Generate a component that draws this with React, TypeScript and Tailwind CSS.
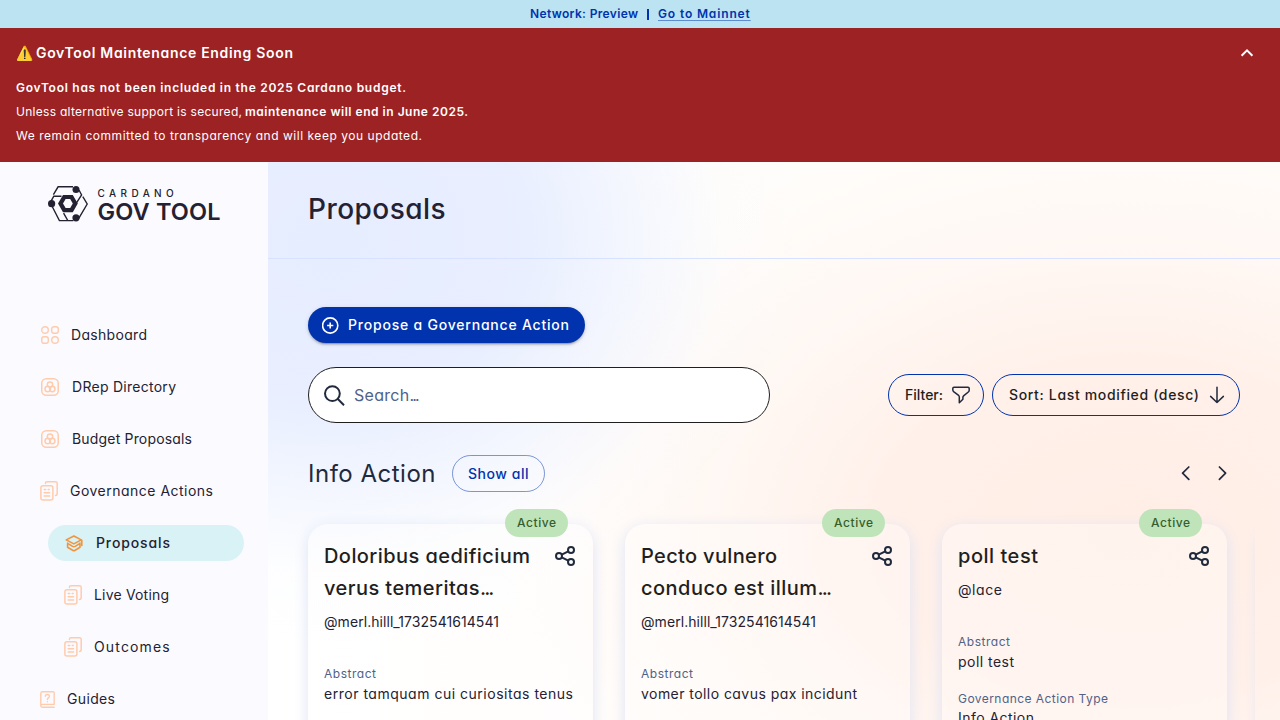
import type { ReactNode } from "react";

const peach = "#FFCBAD";

function Logo() {
  return (
    <svg width="40" height="36" viewBox="0 0 40 36" fill="none" stroke="#242232" strokeWidth="1.4">
      <path d="M5.4 8.6 10.1.8H25" />
      <path d="M2.5 16.2 5.8 10.2H13.5" />
      <path d="M31 4 33.6 9 28.3 17.2" />
      <path d="M34.8 10.6 39.2 18 30.6 32.6" />
      <path d="M4.2 20.5 11.4 34.6H19.4" />
      <path d="M15.6 27.2 19.8 34.6H25.4" />
      <circle cx="28" cy="3.5" r="3.5" fill="#242232" stroke="none" />
      <circle cx="3.6" cy="17.7" r="3.6" fill="#242232" stroke="none" />
      <circle cx="28" cy="31.8" r="3.6" fill="#242232" stroke="none" />
      <path fillRule="evenodd" d="M15 9H24.8L29.8 17.6 24.8 26.2H15L10 17.6ZM17.6 13.1 15 17.6 17.6 22.1H22.2L24.8 17.6 22.2 13.1Z" fill="#242232" stroke="none" />
    </svg>
  );
}

function GridIcon() {
  return (
    <svg width="18" height="18" viewBox="0 0 18 18" fill="none" stroke={peach} strokeWidth="1.4">
      <circle cx="4" cy="4" r="3.3" />
      <rect x="10.7" y="0.7" width="6.6" height="6.6" rx="2.2" />
      <rect x="0.7" y="10.7" width="6.6" height="6.6" rx="2.2" />
      <circle cx="14" cy="14" r="3.3" />
    </svg>
  );
}

function RingsIcon() {
  return (
    <svg width="18" height="18" viewBox="0 0 18 18" fill="none" stroke={peach} strokeWidth="1.5">
      <rect x="0.75" y="0.75" width="16.5" height="16.5" rx="4.5" />
      <circle cx="9" cy="6.6" r="2.7" />
      <circle cx="6.7" cy="11" r="2.7" />
      <circle cx="11.3" cy="11" r="2.7" />
    </svg>
  );
}

function DocsIcon() {
  return (
    <svg width="18" height="20" viewBox="0 0 18 20" fill="none" stroke={peach} strokeWidth="1.5" strokeLinecap="round">
      <rect x="0.9" y="4.8" width="12" height="14.3" rx="2" />
      <path d="M5.4 2.4C5.4 1.3 6.1.8 7 .8H15.4C16.5.8 17.2 1.3 17.2 2.4V12.6C17.2 13.7 16.6 14.4 15.5 14.4M4.2 8.6H5.8M8.2 8.6H9.2M4.2 11.7H9.6M4.2 14.9H9.6" />
    </svg>
  );
}

function HatIcon() {
  return (
    <svg width="18" height="17" viewBox="0 0 18 17" fill="none" stroke="#F0953F" strokeWidth="1.6" strokeLinejoin="round" strokeLinecap="round">
      <path d="M8.9 1 16.2 4.9 8.9 8.9 1.2 4.9ZM16.8 5.4V10.6M2.6 8V12.2L7.6 15.2Q8.9 16 10.2 15.2L15 12.2V8M2.6 8.4 7.6 11.4Q8.9 12.1 10.2 11.4L15 8.4" />
    </svg>
  );
}

function GuideIcon() {
  return (
    <svg width="15" height="17" viewBox="0 0 15 17" fill="none" stroke={peach} strokeWidth="1.4" strokeLinecap="round">
      <path d="M14.2 13.4V2.2C14.2 1.2 13.8.7 12.8.7H2.4C1.3.7.8 1.3.8 2.4V14.6M14.2 13.4H2.2C.3 13.4.3 16.3 2.2 16.3H14.2" />
      <path d="M5.4 5.2C5.4 2.9 9.4 3 9.4 5.3C9.4 6.9 7.4 6.9 7.4 8.5M7.4 10.6V10.7" />
    </svg>
  );
}

function NavItem({ icon, className, children }: { icon: ReactNode; className: string; children: ReactNode }) {
  return (
    <div className={`flex h-9 items-center whitespace-nowrap text-sm ${className}`}>
      {icon}
      {children}
    </div>
  );
}

function ShareIcon() {
  return (
    <svg className="mt-1 shrink-0" width="24" height="24" viewBox="0 0 24 24" fill="none" stroke="#212A3D" strokeWidth="2">
      <circle cx="6" cy="12" r="3" />
      <circle cx="18" cy="6" r="3" />
      <circle cx="18" cy="18" r="3" />
      <path d="M8.7 10.7 15.3 7.3M8.7 13.3 15.3 16.7" />
    </svg>
  );
}

function Card({ title, author, authorClass, children }: { title: ReactNode; author: string; authorClass: string; children: ReactNode }) {
  return (
    <article className="relative h-[420px] w-[285px] shrink-0 rounded-[20px] bg-white/30 p-4 shadow-[0_4px_15px_0_#DDE3F5]">
      <span className="absolute -top-[15px] right-[25px] flex h-7 w-[63px] items-center rounded-full bg-[#C0E4BA] pl-3 text-xs font-medium tracking-[0.57px] text-[#365E2C]">
        Active
      </span>
      <div className="flex justify-between">
        <h3 className="whitespace-nowrap text-[20px] font-medium leading-8 text-[#1F1F1F]">{title}</h3>
        <ShareIcon />
      </div>
      <p className={`mt-2 whitespace-nowrap text-sm leading-5 ${authorClass}`}>{author}</p>
      {children}
    </article>
  );
}

function Label({ className, children }: { className: string; children: ReactNode }) {
  return <p className={`text-xs leading-4 text-[#506288] ${className}`}>{children}</p>;
}

function Dots() {
  return <span className="tracking-[-1.9px]">...</span>;
}

export default function App() {
  return (
    <div className="flex h-[720px] w-[1280px] flex-col overflow-hidden bg-white text-[#242232] [font-family:Inter,sans-serif] [font-feature-settings:'cv11']">
      <div className="flex h-7 shrink-0 items-center whitespace-nowrap bg-[#BBE3F1] pl-[530px] text-xs font-semibold text-[#0033AD]">
        <span className="w-[116px] tracking-[0.35px]">Network: Preview</span>
        <span className="ml-[1px] h-[11px] w-[1.5px] bg-[#0033AD]" />
        <a className="ml-[9.5px] tracking-[0.86px] underline decoration-[#0033AD]/50 underline-offset-2">Go to Mainnet</a>
      </div>

      <section className="h-[134px] shrink-0 whitespace-nowrap bg-[#9C2224] pl-4 pr-6 pt-[13px] text-white">
        <div className="flex h-6 items-center justify-between">
          <h2 className="flex items-center text-sm font-semibold">
            <span className="w-5 text-[14px]">⚠️</span>
            <span className="tracking-[0.677px]">GovTool Maintenance Ending Soon</span>
          </h2>
          <svg width="18" height="18" viewBox="0 0 18 18" fill="none" stroke="white" strokeWidth="2">
            <path d="M3.6 11.8 9 6.4 14.4 11.8" />
          </svg>
        </div>
        <div className="mt-[11px] text-xs leading-6">
          <p className="font-semibold tracking-[0.731px]">GovTool has not been included in the 2025 Cardano budget.</p>
          <p className="flex">
            <span className="w-[229px] tracking-[0.286px]">Unless alternative support is secured,</span>
            <b className="font-semibold tracking-[0.516px]">maintenance will end in June 2025.</b>
          </p>
          <p className="tracking-[0.532px]">We remain committed to transparency and will keep you updated.</p>
        </div>
      </section>

      <div className="flex min-h-0 flex-1">
        <aside className="w-[268px] shrink-0 bg-[#FBFBFF]">
          <div className="flex pl-12 pt-6">
            <Logo />
            <div className="ml-[9.5px] whitespace-nowrap">
              <div className="mt-[1px] text-[10px] font-medium leading-3 tracking-[4.4px]">CARDANO</div>
              <div className="mt-[1px] text-[23.5px] font-semibold leading-6 tracking-[0.15px]">GOV TOOL</div>
            </div>
          </div>
          <nav className="mt-[93px] flex flex-col gap-4">
            <NavItem className="gap-3 pl-[41px] tracking-[0.313px]" icon={<GridIcon />}>Dashboard</NavItem>
            <NavItem className="gap-[13px] pl-[41px] tracking-[0.272px]" icon={<RingsIcon />}>DRep Directory</NavItem>
            <NavItem className="gap-[13px] pl-[41px] tracking-[0.176px]" icon={<RingsIcon />}>Budget Proposals</NavItem>
            <NavItem className="gap-3 pl-10 tracking-[0.487px]" icon={<DocsIcon />}>Governance Actions</NavItem>
            <NavItem className="ml-12 w-[196px] gap-[13px] rounded-full bg-[#D8F2F6] pl-[17px] font-medium tracking-[0.879px]" icon={<HatIcon />}>
              Proposals
            </NavItem>
            <NavItem className="gap-3 pl-16 tracking-[0.183px]" icon={<DocsIcon />}>Live Voting</NavItem>
            <NavItem className="gap-3 pl-16 tracking-[1.15px]" icon={<DocsIcon />}>Outcomes</NavItem>
            <NavItem className="gap-3 pl-10 tracking-[0.35px]" icon={<GuideIcon />}>Guides</NavItem>
          </nav>
        </aside>

        <main className="min-w-0 flex-1 overflow-hidden bg-[radial-gradient(ellipse_480px_400px_at_60px_80px,#E6EDFF_0%,#E9EFFF_42%,rgba(238,243,255,0.7)_62%,rgba(248,250,255,0.3)_82%,rgba(255,255,255,0)_100%),radial-gradient(ellipse_620px_420px_at_860px_370px,#FFEEE6_0%,#FFF0E9_38%,rgba(255,245,240,0.7)_66%,rgba(255,253,250,0)_100%),linear-gradient(90deg,#ffffff_0%,#FFFDFA_50%)]">
          <header className="flex h-[97px] items-center border-b border-[#D6E2FF] pb-[2px] pl-10">
            <h1 className="text-[28px] font-medium tracking-[0.45px]">Proposals</h1>
          </header>

          <div className="pl-10 pr-10 pt-12">
            <button className="flex h-9 w-[277px] items-center whitespace-nowrap rounded-full bg-[#0033AD] pl-[14px] text-sm font-medium tracking-[0.79px] text-white shadow-[0_3px_1px_-2px_rgba(0,0,0,0.2),0_2px_2px_0_rgba(0,0,0,0.14),0_1px_5px_0_rgba(0,0,0,0.12)]">
              <svg className="mr-2 shrink-0" width="17" height="17" viewBox="0 0 17 17" fill="none" stroke="white" strokeWidth="1.6">
                <circle cx="8.2" cy="8.5" r="7.6" />
                <path d="M8.2 5.4V11.6M5.1 8.5H11.3" />
              </svg>
              <span className="pl-[1px]">Propose a Governance Action</span>
            </button>

            <div className="mt-6 flex items-center justify-between">
              <div className="flex h-14 w-[462px] items-center rounded-full border border-[#1F1F1F] bg-white pl-[15px] text-base tracking-[0.3px] text-[#506288]">
                <svg className="mr-[9px]" width="21" height="21" viewBox="0 0 21 21" fill="none" stroke="#212A3D" strokeWidth="2">
                  <circle cx="8.4" cy="8.6" r="7.4" />
                  <path d="M13.6 13.8 20 20.2" />
                </svg>
                <span>Search<Dots /></span>
              </div>
              <div className="flex gap-2 whitespace-nowrap text-sm font-medium text-[#1F1F1F]">
                <button className="flex h-[42px] w-24 items-center rounded-[21px] border border-[#0033AD] pl-4">
                  <span className="w-[46px] text-left">Filter:</span>
                  <svg width="20" height="20" viewBox="0 0 20 20" fill="none" stroke="#212A3D" strokeWidth="1.5" strokeLinejoin="round">
                    <path d="M3 2.2H17C17.8 2.2 18.2 2.7 18.2 3.4V5.2C18.2 6 17.9 6.5 17.3 7L12.6 10.8C12.1 11.2 11.9 11.7 11.9 12.3V14.2L8.3 17.7V12C8.3 11.4 8 10.9 7.6 10.4L2.6 6.6C2 6 1.8 5.5 1.8 4.8V3.4C1.8 2.7 2.2 2.2 3 2.2Z" />
                  </svg>
                </button>
                <button className="flex h-[42px] w-[248px] items-center rounded-[21px] border border-[#0033AD] pl-4">
                  <span className="w-[200px] text-left tracking-[0.656px]">Sort: Last modified (desc)</span>
                  <svg width="16" height="18" viewBox="0 0 16 18" fill="none" stroke="#212A3D" strokeWidth="1.5" strokeLinecap="round" strokeLinejoin="round">
                    <path d="M8 1.2V16.5M1.6 10.4 8 16.5 14.4 10.4" />
                  </svg>
                </button>
              </div>
            </div>

            <div className="mt-8 flex h-[37px] items-center">
              <h2 className="w-[144px] whitespace-nowrap text-[24px] tracking-[0.5px] text-[#212A3D]">Info Action</h2>
              <button className="h-[37px] w-[93px] rounded-full border border-[#0033AD]/50 text-sm font-medium tracking-[0.56px] text-[#0033AD]">
                Show all
              </button>
              <div className="mb-[2px] ml-auto mr-[13px] flex gap-[28px]">
                <svg width="9" height="16" viewBox="0 0 9 16" fill="none" stroke="#212A3D" strokeWidth="1.7" strokeLinecap="round" strokeLinejoin="round">
                  <path d="M7.8 2 1.6 8.2 7.8 14.4" />
                </svg>
                <svg width="9" height="16" viewBox="0 0 9 16" fill="none" stroke="#212A3D" strokeWidth="1.7" strokeLinecap="round" strokeLinejoin="round">
                  <path d="M1.4 2 7.6 8.2 1.4 14.4" />
                </svg>
              </div>
            </div>

            <div className="-mx-[15px] -mb-4 mt-3 flex gap-8 overflow-hidden px-[15px] pb-6 pt-5">
              <Card
                author="@merl.hilll_1732541614541"
                authorClass="tracking-[0.06px]"
                title={
                  <>
                    <span className="tracking-[0.435px]">Doloribus aedificium</span>
                    <br />
                    <span className="tracking-[0.44px]">verus temeritas<Dots /></span>
                  </>
                }
              >
                <Label className="mt-[34px] tracking-[0.522px]">Abstract</Label>
                <p className="mt-[2px] whitespace-nowrap text-sm leading-5 tracking-[0.514px]">error tamquam cui curiositas tenus</p>
              </Card>
              <Card
                author="@merl.hilll_1732541614541"
                authorClass="tracking-[0.06px]"
                title={
                  <>
                    <span className="tracking-[0.35px]">Pecto vulnero</span>
                    <br />
                    <span className="tracking-[0.47px]">conduco est illum<Dots /></span>
                  </>
                }
              >
                <Label className="mt-[34px] tracking-[0.522px]">Abstract</Label>
                <p className="mt-[2px] whitespace-nowrap text-sm leading-5 tracking-[0.445px]">vomer tollo cavus pax incidunt</p>
              </Card>
              <Card author="@lace" authorClass="tracking-[0.586px]" title={<span className="tracking-[0.525px]">poll test</span>}>
                <Label className="mt-[34px] tracking-[0.522px]">Abstract</Label>
                <p className="mt-[2px] text-sm leading-5 tracking-[0.467px]">poll test</p>
                <Label className="mt-[19px] tracking-[0.448px]">Governance Action Type</Label>
                <p className="mt-[1px] text-sm leading-5 tracking-[0.456px]">Info Action</p>
              </Card>
              <div className="h-[420px] w-[285px] shrink-0 rounded-[20px] shadow-[0_4px_15px_0_#DDE3F5]" />
            </div>
          </div>
        </main>
      </div>
    </div>
  );
}
